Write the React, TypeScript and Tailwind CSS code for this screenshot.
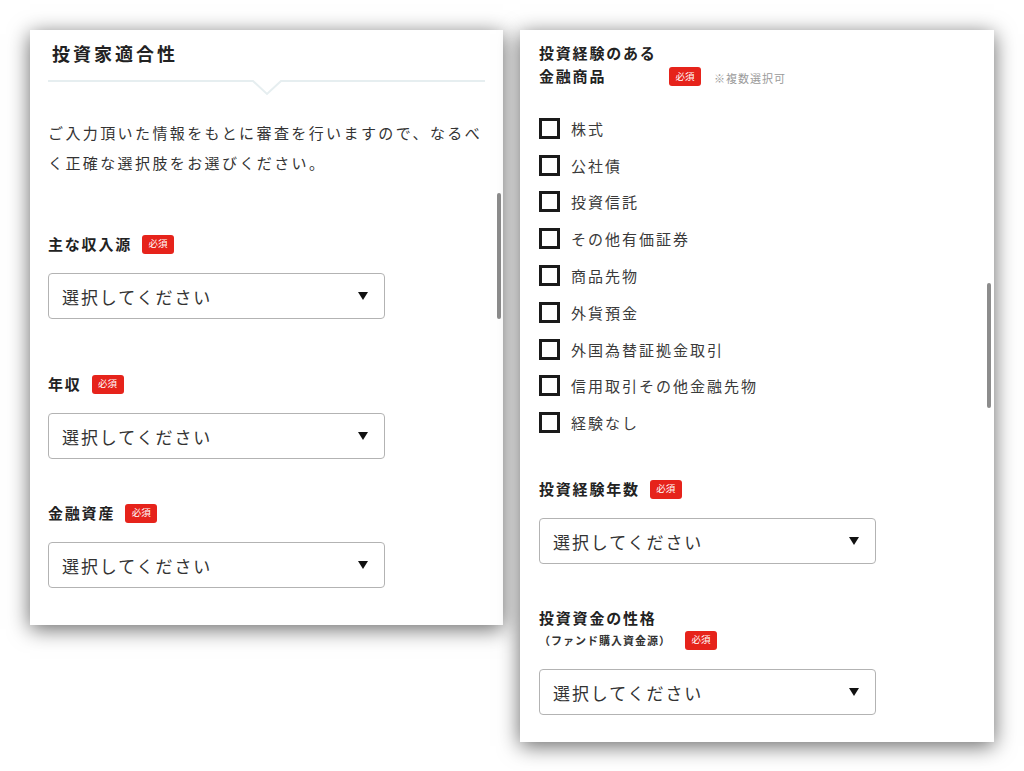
const font = "font-['Noto_Sans_CJK_JP','Noto_Sans',sans-serif]";

const experienceItems = [
  "株式",
  "公社債",
  "投資信託",
  "その他有価証券",
  "商品先物",
  "外貨預金",
  "外国為替証拠金取引",
  "信用取引その他金融先物",
  "経験なし",
];

const Required = ({ className = "" }: { className?: string }) => (
  <span
    className={`inline-flex h-[19px] w-[32px] shrink-0 items-center justify-center rounded-[3px] bg-[#e6231b] text-[9.5px] leading-none text-white ${className}`}
  >
    必須
  </span>
);

const SelectBox = ({ className = "" }: { className?: string }) => (
  <div
    className={`flex h-[46px] w-[337px] items-center justify-between rounded-[4px] border border-[#b3b3b3] bg-white pl-[13px] pr-[16px] ${className}`}
  >
    <span className="text-[17px] leading-none tracking-[1.9px] text-[#333]">選択してください</span>
    <svg width="10" height="8" viewBox="0 0 10 8">
      <polygon points="0,0 10,0 5,8" fill="#111" />
    </svg>
  </div>
);

const Scrollbar = ({ className }: { className: string }) => (
  <div className={`absolute left-[467px] w-[4px] rounded-full bg-[#8c8c8c] ${className}`} />
);

const Label = ({ text, badgeGap = "ml-[10px]", className = "" }: { text: string; badgeGap?: string; className?: string }) => (
  <div className={`flex h-[22px] items-center ${className}`}>
    <span className="text-[15px] font-bold leading-[22px] tracking-[1.8px] text-[#222]">{text}</span>
    <Required className={badgeGap} />
  </div>
);

const panelShadow = "shadow-[0_4px_20px_rgba(0,0,0,0.6)]";

function SuitabilityPanel() {
  return (
    <section className={`relative h-[595px] w-[473px] shrink-0 overflow-hidden bg-white px-[18px] pt-[10px] ${panelShadow}`}>
      <h2 className="ml-[4px] text-[18px] font-bold leading-[26px] tracking-[3px] text-[#222]">投資家適合性</h2>
      <svg className="mt-[14px] block" width="437" height="16" viewBox="0 0 437 16">
        <polyline
          points="0,1 205,1 219,14 233,1 437,1"
          fill="none"
          stroke="#e6eef0"
          strokeWidth="2"
        />
      </svg>
      <p className="mt-[22px] text-[15px] leading-[30px] tracking-[2.4px] text-[#333]">
        ご入力頂いた情報をもとに審査を行いますので、なるべ
        <br />
        く正確な選択肢をお選びください。
      </p>

      <Label text="主な収入源" className="mt-[55px]" />
      <SelectBox className="mt-[18px] w-[336px]" />

      <Label text="年収" className="mt-[54px]" />
      <SelectBox className="mt-[18px] w-[336px]" />

      <Label text="金融資産" className="mt-[43px]" />
      <SelectBox className="mt-[18px] w-[336px]" />

      <Scrollbar className="top-[163px] h-[126px]" />
    </section>
  );
}

function ExperiencePanel() {
  return (
    <section className={`relative h-[712px] w-[474px] shrink-0 overflow-hidden bg-white pl-[19px] pr-[18px] pt-[11px] ${panelShadow}`}>
      <div className="flex items-end">
        <h3 className="w-[130px] text-[15px] font-bold leading-[23px] tracking-[1.8px] text-[#222]">
          投資経験のある
          <br />
          金融商品
        </h3>
        <Required className="mb-[1px]" />
        <span className="mb-[3px] ml-[13px] text-[11px] leading-none tracking-[1px] text-[#9a9a9a]">※複数選択可</span>
      </div>

      <ul className="mt-[23px]">
        {experienceItems.map((item) => (
          <li key={item} className="flex h-[36.8px] items-center">
            <span className="h-[21px] w-[21px] shrink-0 border-[3px] border-[#1a1a1a]" />
            <span className="ml-[11px] text-[15px] leading-none tracking-[2px] text-[#3a3a3a]">{item}</span>
          </li>
        ))}
      </ul>

      <Label text="投資経験年数" className="mt-[37px]" />
      <SelectBox className="mt-[18px]" />

      <div className="mt-[42px]">
        <div className="text-[15px] font-bold leading-[23px] tracking-[1.8px] text-[#222]">投資資金の性格</div>
        <div className="flex h-[22px] items-center">
          <span className="text-[11px] font-bold leading-none tracking-[1px] text-[#333]">（ファンド購入資金源）</span>
          <Required className="ml-[14px]" />
        </div>
      </div>
      <SelectBox className="mt-[18px]" />

      <Scrollbar className="top-[253px] h-[125px]" />
    </section>
  );
}

export default function App() {
  return (
    <div className={`flex h-[771px] w-[1024px] items-start gap-[17px] overflow-hidden bg-white pl-[30px] pt-[30px] ${font}`}>
      <SuitabilityPanel />
      <ExperiencePanel />
    </div>
  );
}
